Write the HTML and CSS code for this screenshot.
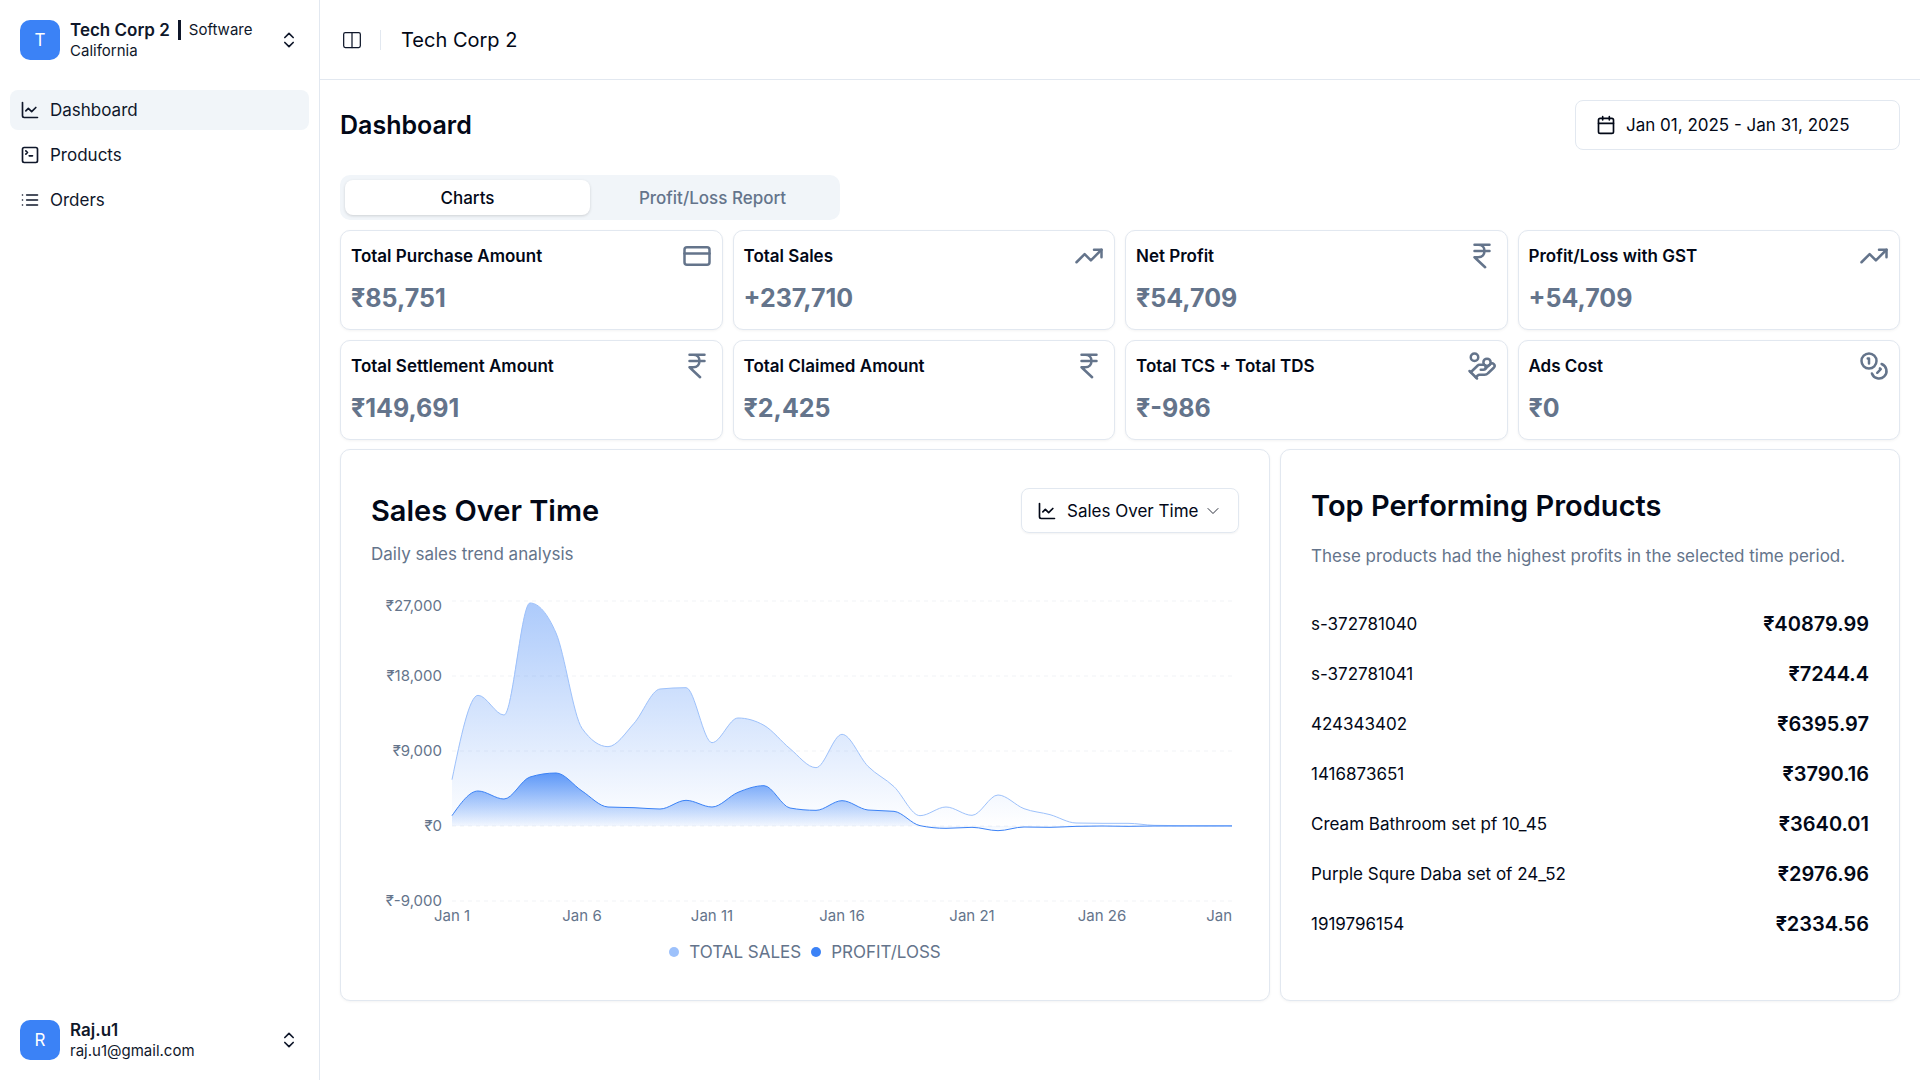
FILE: index.html
```html
<!DOCTYPE html>
<html lang="en">
<head>
<meta charset="utf-8">
<meta name="viewport" content="width=device-width, initial-scale=1">
<title>Dashboard - Tech Corp 2</title>
<link rel="stylesheet" href="styles.css">
</head>
<body>
<svg class="sprite" aria-hidden="true">
  <symbol id="i-chart" viewBox="0 0 24 24"><path d="M3 3v16a2 2 0 0 0 2 2h16"/><path d="m19 9-5 5-4-4-3 3"/></symbol>
  <symbol id="i-terminal" viewBox="0 0 24 24"><path d="m7 11 2-2-2-2"/><path d="M11 13h4"/><rect width="18" height="18" x="3" y="3" rx="2"/></symbol>
  <symbol id="i-list" viewBox="0 0 24 24"><path d="M3 12h.01M3 18h.01M3 6h.01M8 12h13M8 18h13M8 6h13"/></symbol>
  <symbol id="i-updown" viewBox="0 0 24 24"><path d="m7 15 5 5 5-5"/><path d="m7 9 5-5 5 5"/></symbol>
  <symbol id="i-down" viewBox="0 0 24 24"><path d="m6 9 6 6 6-6"/></symbol>
  <symbol id="i-panel" viewBox="0 0 24 24"><rect width="20" height="18" x="2" y="3" rx="2"/><path d="M12 3v18"/></symbol>
  <symbol id="i-calendar" viewBox="0 0 24 24"><path d="M8 2v4M16 2v4"/><rect width="18" height="18" x="3" y="4" rx="2"/><path d="M3 10h18"/></symbol>
  <symbol id="i-card" viewBox="0 0 24 24"><rect width="20" height="14" x="2" y="5" rx="2"/><path d="M2 10h20"/></symbol>
  <symbol id="i-trend" viewBox="0 0 24 24"><path d="m22 7-8.5 8.5-5-5L2 17"/><path d="M16 7h6v6"/></symbol>
  <symbol id="i-rupee" viewBox="0 0 24 24"><path d="M6 3h12M6 8h12M6 13l8.5 8M6 13h3M9 13c6.667 0 6.667-10 0-10"/></symbol>
  <symbol id="i-hand" viewBox="0 0 24 24"><path d="M11 15h2a2 2 0 1 0 0-4h-3c-.6 0-1.1.2-1.4.6L3 17"/><path d="m7 21 1.600-1.400c.3-.4.8-.6 1.400-.6h4c1.100 0 2.100-.4 2.800-1.200l4.600-4.400a2 2 0 0 0-2.750-2.910l-4.200 3.900"/><path d="m2 16 6 6"/><circle cx="16" cy="9" r="2.900"/><circle cx="6" cy="5" r="3"/></symbol>
  <symbol id="i-coins" viewBox="0 0 24 24"><circle cx="8" cy="8" r="6"/><path d="M18.090 10.370A6 6 0 1 1 10.340 18"/><path d="M7 6h1v4"/><path d="m16.710 13.880.7.71-2.820 2.820"/></symbol>
</svg>

<div class="app">
  <aside class="sidebar">
    <button class="account" type="button">
      <span class="avatar">T</span>
      <span class="account-text">
        <span class="account-line"><span class="account-name">Tech Corp 2</span><span class="bar"></span><span class="account-sub">Software</span></span>
        <span class="account-sub">California</span>
      </span>
      <svg class="icon"><use href="#i-updown"/></svg>
    </button>
    <nav class="nav">
      <a class="nav-link active" href="#dashboard"><svg class="icon"><use href="#i-chart"/></svg>Dashboard</a>
      <a class="nav-link" href="#products"><svg class="icon"><use href="#i-terminal"/></svg>Products</a>
      <a class="nav-link" href="#orders"><svg class="icon"><use href="#i-list"/></svg>Orders</a>
    </nav>
    <button class="account" type="button">
      <span class="avatar">R</span>
      <span class="account-text">
        <span class="account-name">Raj.u1</span>
        <span class="account-sub">raj.u1@gmail.com</span>
      </span>
      <svg class="icon"><use href="#i-updown"/></svg>
    </button>
  </aside>

  <div class="page">
    <header class="topbar">
      <button class="toggle" type="button" aria-label="Toggle sidebar"><svg class="icon"><use href="#i-panel"/></svg></button>
      <span class="divider"></span>
      <span class="topbar-title">Tech Corp 2</span>
    </header>

    <main class="content" id="dashboard">
      <div class="heading">
        <h1>Dashboard</h1>
        <button class="date" type="button"><svg class="icon"><use href="#i-calendar"/></svg>Jan 01, 2025 - Jan 31, 2025</button>
      </div>

      <div class="tabs" role="tablist">
        <button class="tab selected" type="button" role="tab" aria-selected="true">Charts</button>
        <button class="tab" type="button" role="tab" aria-selected="false">Profit/Loss Report</button>
      </div>

      <section class="stats">
        <article class="card stat"><div class="stat-top"><h2>Total Purchase Amount</h2><svg class="icon-lg"><use href="#i-card"/></svg></div><p>₹85,751</p></article>
        <article class="card stat"><div class="stat-top"><h2>Total Sales</h2><svg class="icon-lg"><use href="#i-trend"/></svg></div><p>+237,710</p></article>
        <article class="card stat"><div class="stat-top"><h2>Net Profit</h2><svg class="icon-lg"><use href="#i-rupee"/></svg></div><p>₹54,709</p></article>
        <article class="card stat"><div class="stat-top"><h2>Profit/Loss with GST</h2><svg class="icon-lg"><use href="#i-trend"/></svg></div><p>+54,709</p></article>
        <article class="card stat"><div class="stat-top"><h2>Total Settlement Amount</h2><svg class="icon-lg"><use href="#i-rupee"/></svg></div><p>₹149,691</p></article>
        <article class="card stat"><div class="stat-top"><h2>Total Claimed Amount</h2><svg class="icon-lg"><use href="#i-rupee"/></svg></div><p>₹2,425</p></article>
        <article class="card stat"><div class="stat-top"><h2>Total TCS + Total TDS</h2><svg class="icon-lg"><use href="#i-hand"/></svg></div><p>₹-986</p></article>
        <article class="card stat"><div class="stat-top"><h2>Ads Cost</h2><svg class="icon-lg"><use href="#i-coins"/></svg></div><p>₹0</p></article>
      </section>

      <section class="panels">
        <article class="card panel">
          <div class="panel-head">
            <h2>Sales Over Time</h2>
            <div class="picker">
              <svg class="icon"><use href="#i-chart"/></svg>
              <select aria-label="Chart type"><option>Sales Over Time</option></select>
              <svg class="icon chevron"><use href="#i-down"/></svg>
            </div>
          </div>
          <p class="muted">Daily sales trend analysis</p>
          <div class="chart">
            <div class="y-axis"><span class="top-tick">₹27,000</span><span>₹18,000</span><span>₹9,000</span><span>₹0</span><span>₹-9,000</span></div>
            <svg class="plot" viewBox="0 0 780 300" preserveAspectRatio="none" role="img" aria-label="Total sales and profit/loss per day">
              <defs>
                <linearGradient id="g-sales" x1="0" y1="0" x2="0" y2="1"><stop offset="0" stop-color="#3b82f6" stop-opacity=".42"/><stop offset="1" stop-color="#3b82f6" stop-opacity="0"/></linearGradient>
                <linearGradient id="g-profit" x1="0" y1="0" x2="0" y2="1"><stop offset="0" stop-color="#3b82f6" stop-opacity=".8"/><stop offset="1" stop-color="#3b82f6" stop-opacity="0"/></linearGradient>
              </defs>
              <path class="grid" d="M0 0H780M0 75H780M0 150H780M0 225H780M0 300H780"/>
              <path id="sales-area" fill="url(#g-sales)"/>
              <path id="sales-line" class="line sales"/>
              <path id="profit-area" fill="url(#g-profit)"/>
              <path id="profit-line" class="line profit"/>
            </svg>
            <div class="x-axis"><span>Jan 1</span><span>Jan 6</span><span>Jan 11</span><span>Jan 16</span><span>Jan 21</span><span>Jan 26</span><span class="last-tick">Jan</span></div>
          </div>
          <div class="legend"><span class="key sales">TOTAL SALES</span><span class="key profit">PROFIT/LOSS</span></div>
        </article>

        <article class="card panel">
          <h2 class="products-title">Top Performing Products</h2>
          <p class="muted">These products had the highest profits in the selected time period.</p>
          <ul class="products">
            <li><span>s-372781040</span><strong>₹40879.99</strong></li>
            <li><span>s-372781041</span><strong>₹7244.4</strong></li>
            <li><span>424343402</span><strong>₹6395.97</strong></li>
            <li><span>1416873651</span><strong>₹3790.16</strong></li>
            <li><span>Cream Bathroom set pf 10_45</span><strong>₹3640.01</strong></li>
            <li><span>Purple Squre Daba set of 24_52</span><strong>₹2976.96</strong></li>
            <li><span>1919796154</span><strong>₹2334.56</strong></li>
          </ul>
        </article>
      </section>
    </main>
  </div>
</div>
<script src="chart.js"></script>
</body>
</html>
```
FILE: styles.css
```css
:root {
  --ink: #020817;
  --side: #0f172a;
  --muted: #64748b;
  --border: #e2e8f0;
  --soft: #f1f5f9;
  --blue: #3b82f6;
  --light-blue: #9dc1fb;
}

* { box-sizing: border-box; }

body {
  margin: 0;
  font: 17px/26px Inter, "Noto Sans", sans-serif;
  color: var(--ink);
  background: #fff;
}

h1, h2, p, ul { margin: 0; padding: 0; }
button, select { font: inherit; color: inherit; background: none; border: 0; padding: 0; cursor: pointer; }

.sprite { position: absolute; width: 0; height: 0; }
.icon, .icon-lg {
  flex: none;
  width: 20px;
  height: 20px;
  fill: none;
  stroke: currentColor;
  stroke-width: 2;
  stroke-linecap: round;
  stroke-linejoin: round;
}
.icon-lg { width: 30px; height: 30px; color: var(--muted); }

.app { display: flex; min-height: 100vh; }

.sidebar {
  flex: none;
  display: flex;
  flex-direction: column;
  width: 320px;
  padding: 10px;
  border-right: 1px solid var(--border);
  color: var(--side);
}
.account {
  display: flex;
  align-items: center;
  gap: 10px;
  height: 60px;
  padding: 0 10px;
  text-align: left;
}
.avatar {
  display: grid;
  place-items: center;
  width: 40px;
  height: 40px;
  border-radius: 10px;
  background: var(--blue);
  color: #fff;
}
.account-text { flex: 1; display: flex; flex-direction: column; }
.account-line { display: flex; align-items: center; gap: 8px; height: 22px; }
.account-name { font-weight: 600; line-height: 22px; }
.account-sub { font-size: 15px; line-height: 20px; }
.bar { width: 3px; height: 20px; background: var(--side); }

.nav { flex: 1; display: flex; flex-direction: column; gap: 5px; padding-top: 20px; }
.nav-link {
  display: flex;
  align-items: center;
  gap: 10px;
  height: 40px;
  padding: 0 10px;
  border-radius: 8px;
  color: inherit;
  text-decoration: none;
}
.nav-link.active { background: var(--soft); }

.page { flex: 1; min-width: 0; }
.topbar {
  display: flex;
  align-items: center;
  gap: 20px;
  height: 80px;
  padding: 0 20px;
  border-bottom: 1px solid var(--border);
}
.toggle { display: flex; padding: 0 0 0 2px; color: var(--side); }
.toggle .icon { stroke-width: 1.5; }
.divider { width: 1px; height: 20px; margin-left: -2px; background: var(--border); }
.topbar-title { font-size: 20px; line-height: 30px; }

.content { padding: 20px; }
.heading { display: flex; justify-content: space-between; align-items: center; height: 50px; }
h1 { font-size: 25px; font-weight: 600; }
.date {
  display: flex;
  align-items: center;
  gap: 10px;
  width: 325px;
  height: 50px;
  padding: 0 20px;
  border: 1px solid var(--border);
  border-radius: 8px;
}

.tabs {
  display: flex;
  width: 500px;
  max-width: 100%;
  margin: 25px 0 10px;
  padding: 5px;
  border-radius: 10px;
  background: var(--soft);
}
.tab { flex: 1; height: 35px; border-radius: 8px; font-weight: 500; color: var(--muted); }
.tab.selected { background: #fff; color: var(--ink); box-shadow: 0 1px 3px rgb(0 0 0 / .15); }

.card { border: 1px solid var(--border); border-radius: 10px; background: #fff; box-shadow: 0 1px 3px rgb(0 0 0 / .05); }

.stats { display: grid; grid-template-columns: repeat(4, 1fr); gap: 10px; }
.stat { padding: 10px 10px 13px; }
.stat-top { display: flex; justify-content: space-between; align-items: center; }
.stat h2 { font-size: 17px; font-weight: 600; }
.stat p { margin-top: 10px; font-size: 25px; line-height: 35px; font-weight: 700; color: var(--muted); }

.panels { display: grid; grid-template-columns: 3fr 2fr; gap: 10px; margin-top: 9px; }
.panel { min-width: 0; padding: 38px 30px 35px; }
.panel h2 { font-size: 29px; line-height: 45px; font-weight: 600; }
.muted { color: var(--muted); }

.panel-head { display: flex; justify-content: space-between; align-items: center; margin-bottom: 8px; }
.picker {
  display: flex;
  align-items: center;
  width: 218px;
  height: 45px;
  padding: 0 15px;
  border: 1px solid var(--border);
  border-radius: 8px;
  box-shadow: 0 1px 2px rgb(0 0 0 / .05);
}
.picker select { appearance: none; flex: 1; min-width: 0; margin-left: 10px; }
.picker .chevron { stroke-width: 1; }

.chart { display: grid; grid-template-columns: 71px 1fr; column-gap: 10px; margin: 34px 7px 0 0; }
.y-axis {
  display: flex;
  flex-direction: column;
  justify-content: space-between;
  height: 300px;
  text-align: right;
}
.y-axis span, .x-axis span {
  display: flex;
  align-items: center;
  height: 0;
  font-size: 15px;
  color: var(--muted);
  white-space: nowrap;
}
.y-axis span { justify-content: flex-end; }
.y-axis .top-tick { height: 10px; margin-bottom: -10px; }
.plot { display: block; width: 100%; height: 300px; overflow: visible; }
.grid { fill: none; stroke: #f1f3f6; stroke-width: 1; stroke-dasharray: 4; }
.line { fill: none; stroke-width: 1; vector-effect: non-scaling-stroke; }
.line.sales { stroke: var(--light-blue); }
.line.profit { stroke: var(--blue); }
.x-axis { grid-column: 2; display: flex; justify-content: space-between; height: 30px; padding-top: 15px; }
.x-axis span { width: 0; justify-content: center; }
.x-axis .last-tick { justify-content: flex-end; }

.legend { display: flex; justify-content: center; gap: 10px; padding-top: 8px; color: var(--muted); }
.key { display: flex; align-items: center; gap: 10px; }
.key::before { content: ""; width: 10px; height: 10px; border-radius: 50%; }
.key.sales::before { background: var(--light-blue); }
.key.profit::before { background: var(--blue); }

.panel .products-title { line-height: 35px; margin-bottom: 20px; }
.products { display: flex; flex-direction: column; gap: 24px; margin-top: 42px; list-style: none; }
.products li { display: flex; justify-content: space-between; align-items: center; }
.products strong { font-size: 20px; font-weight: 600; }
```
FILE: chart.js
```js
const sales = [5560, 15680, 13320, 26760, 23160, 11720, 9520, 12320, 16440, 16600, 10000, 12960, 12080, 9280, 7000, 11000, 7160, 4720, 1240, 2280, 1280, 3720, 2080, 1360, 360, 320, 320, 80, 40, 40, 40];
const profit = [1240, 4200, 3240, 5880, 6360, 4200, 2280, 2200, 2040, 3080, 2280, 4040, 4840, 2160, 1880, 3040, 1920, 1760, 40, -280, -160, -560, -120, -160, -40, 0, -40, 0, 0, 0, 0];

const STEP = 26;
const ZERO = 225;
const toY = (value) => ZERO - value / 120;

// Monotone cubic interpolation with evenly spaced points.
function curve(values) {
  const y = values.map(toY);
  const last = y.length - 1;
  const slope = (i) => (y[i + 1] - y[i]) / STEP;
  const tangent = y.map((_, i) => {
    if (i === 0 || i === last) return null;
    const a = slope(i - 1);
    const b = slope(i);
    return (Math.sign(a) + Math.sign(b)) * Math.min(Math.abs(a), Math.abs(b), Math.abs(a + b) / 4) || 0;
  });
  tangent[0] = (3 * slope(0) - tangent[1]) / 2;
  tangent[last] = (3 * slope(last - 1) - tangent[last - 1]) / 2;

  let d = `M0 ${y[0]}`;
  for (let i = 0; i < last; i++) {
    const x = i * STEP;
    const third = STEP / 3;
    d += `C${x + third} ${y[i] + tangent[i] * third} ${x + STEP - third} ${y[i + 1] - tangent[i + 1] * third} ${x + STEP} ${y[i + 1]}`;
  }
  return d;
}

function draw(name, values) {
  const d = curve(values);
  document.getElementById(`${name}-line`).setAttribute("d", d);
  document.getElementById(`${name}-area`).setAttribute("d", `${d}V${ZERO}H0Z`);
}

draw("sales", sales);
draw("profit", profit);
```
